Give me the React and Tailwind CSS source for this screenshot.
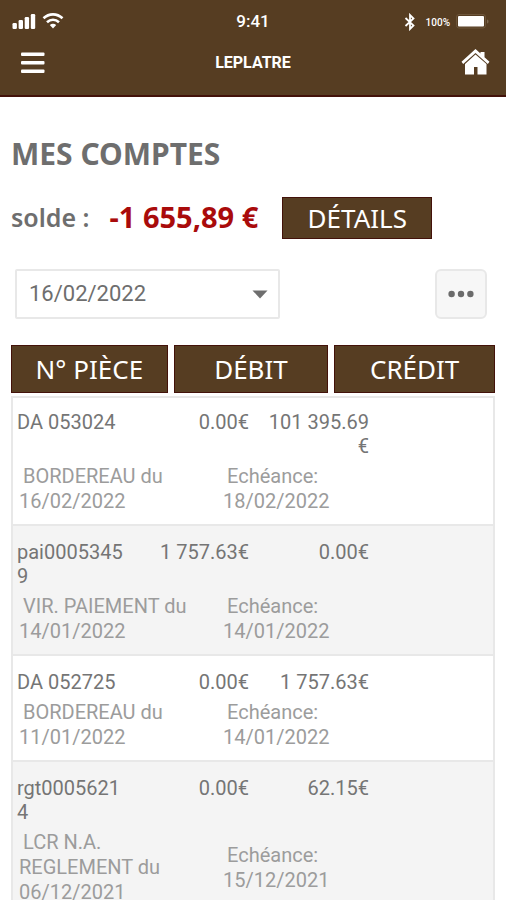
import { useState } from "react";

const BARS = [6, 9, 12, 15];

const ENTRIES = [
  { id: "DA 053024", debit: "0.00€", credit: "101 395.69€", label: "BORDEREAU du 16/02/2022", due: "18/02/2022" },
  { id: "pai00053459", debit: "1 757.63€", credit: "0.00€", label: "VIR. PAIEMENT du 14/01/2022", due: "14/01/2022" },
  { id: "DA 052725", debit: "0.00€", credit: "1 757.63€", label: "BORDEREAU du 11/01/2022", due: "14/01/2022" },
  { id: "rgt00056214", debit: "0.00€", credit: "62.15€", label: "LCR N.A. REGLEMENT du 06/12/2021", due: "15/12/2021" },
];

/* amounts and ids only break mid-string, never at their spaces */
const nbsp = (s) => s.replace(/ /g, "\u00a0");

function StatusBar() {
  return (
    <div className="grid grid-cols-3 items-center px-3 h-11">
      <div className="flex items-center gap-1.5">
        <svg width="24" height="18" viewBox="0 0 24 18" fill="#fff" aria-hidden="true">
          {BARS.map((h, i) => (
            <rect key={h} x={0.5 + i * 6.1} y={16 - h} width="4.4" height={h} rx="1.2" />
          ))}
        </svg>
        <svg width="22" height="18" viewBox="0 0 22 18" fill="none" stroke="#fff" strokeWidth="2.6" aria-hidden="true">
          <path d="M1.5 5.300C7 0 15 0 20.5 5.300" />
          <path d="M5 9.200c3.500-3.300 8.500-3.300 12 0" />
          <path d="M7.800 12c2-1.800 4.400-1.800 6.400 0L11 15.500z" fill="#fff" stroke="none" />
        </svg>
      </div>
      <div className="text-center text-[17px] font-medium">9:41</div>
      <div className="flex items-center justify-end gap-1 pr-1">
        <svg className="mr-1.5" width="12" height="18" viewBox="0 0 12 18" fill="none" stroke="#fff" strokeWidth="1.8" aria-hidden="true">
          <path d="M1.500 5l8 7.500L6 16V2l3.500 3.500-8 7.500" />
        </svg>
        <span className="text-[10px] font-medium">100%</span>
        <svg className="ml-0.5" width="34" height="16" viewBox="0 0 34 16" aria-hidden="true">
          <rect x="0.500" y="0.500" width="29" height="13.500" rx="2.500" fill="none" stroke="#6d563b" />
          <rect x="2" y="2" width="26" height="10.500" rx="1" fill="#fff" />
          <path d="M31 5.500v4c2-.5 2-3.500 0-4z" fill="#7d6850" />
        </svg>
      </div>
    </div>
  );
}

function TopBar() {
  return (
    <header className="bg-[#563d22] text-white border-b-2 border-[#43120a]">
      <StatusBar />
      <div className="grid grid-cols-3 items-center px-4 h-[38px] mb-[13px]">
        <button type="button" aria-label="Menu" className="justify-self-start p-1">
          <svg width="25" height="22" viewBox="0 0 25 22" fill="#fff" aria-hidden="true">
            <rect x="1" y="0.500" width="23.500" height="3.600" rx="1" />
            <rect x="1" y="9" width="23.500" height="3.600" rx="1" />
            <rect x="1" y="17.400" width="23.500" height="3.600" rx="1" />
          </svg>
        </button>
        <h1 className="text-center text-base font-bold">LEPLATRE</h1>
        <a href="#accueil" aria-label="Accueil" className="justify-self-end">
          <svg width="29" height="28" viewBox="0 0 29 28" fill="#fff" aria-hidden="true">
            <path d="M14.500 0L19.500 4.500V3h4v5.200l5 4.600-1.700 2.200L14.500 4 2.200 15l-1.700-2.200z" />
            <path d="M14.500 5.500L4 15V25.500h9v-7.500h3.500v7.500H25.500v-10.500z" />
          </svg>
        </a>
      </div>
    </header>
  );
}

function Entry({ e }) {
  return (
    <tbody className="block pt-3.5 pb-2.5 border-2 border-b-0 border-[#e8e8e8] first-of-type:pt-3 odd:bg-[#f4f4f4] even:bg-white">
      <tr className="grid grid-cols-4 leading-6 text-[#757575]">
        <td className="px-1 wrap-anywhere">{nbsp(e.id)}</td>
        <td className="pl-2 pr-1 text-right wrap-anywhere">{nbsp(e.debit)}</td>
        <td className="pl-2 pr-1 text-right wrap-anywhere">{nbsp(e.credit)}</td>
      </tr>
      <tr className="grid grid-cols-12 items-center mt-1.5 leading-[25px] text-[#9c9c9c] indent-1">
        <td className="col-span-5 pl-1.5">{e.label}</td>
        <td className="col-span-7 pl-2.5">Echéance:<br />{e.due}</td>
      </tr>
    </tbody>
  );
}

export default function App() {
  const [date, setDate] = useState("16/02/2022");
  return (
    <div className="min-h-screen bg-white font-['Roboto',sans-serif]">
      <TopBar />
      <main className="px-[11px] pt-[35px]">
        <h2 className="font-['Noto_Sans',sans-serif] text-[30px] leading-[44px] font-bold text-[#6e6e6e]">MES COMPTES</h2>

        <div className="flex items-center mt-[21px] font-['Noto_Sans',sans-serif] whitespace-nowrap">
          <span className="text-[25px] leading-10 pb-0.5 font-semibold text-[#6e6e6e]">solde :</span>
          <span className="ml-5 text-[29px] leading-10 pb-0.5 font-bold text-[#a90b0b]">-1 655,89 €</span>
          <button type="button" className="ml-6 w-[150px] h-[42px] bg-[#563d22] border border-[#43120a] text-[26px] leading-10 text-white">DÉTAILS</button>
        </div>

        <div className="flex items-center justify-between mt-[30px] pl-1 pr-2">
          <div className="relative w-[265px]">
            <select
              aria-label="Date"
              value={date}
              onChange={(ev) => setDate(ev.target.value)}
              className="appearance-none w-full h-[50px] pl-3 pb-0.5 rounded-xs border-2 border-[#e8e8e8] bg-white text-[22px] text-[#6e6e6e]"
            >
              <option>16/02/2022</option>
              <option>14/01/2022</option>
            </select>
            <svg className="absolute right-3 top-[21px] pointer-events-none" width="16" height="9" viewBox="0 0 16 9" fill="#6e6e6e" aria-hidden="true">
              <path d="M0.500 0.500h15L8 8.500z" />
            </svg>
          </div>
          <button type="button" aria-label="Plus d'options" className="flex items-center justify-center w-[52px] h-[50px] rounded-md border-2 border-[#e8e8e8] bg-[#f7f7f7]">
            <svg width="26" height="8" viewBox="0 0 26 8" fill="#6b6b6b" aria-hidden="true">
              <circle cx="3.600" cy="4" r="3.200" />
              <circle cx="13" cy="4" r="3.200" />
              <circle cx="22.400" cy="4" r="3.200" />
            </svg>
          </button>
        </div>

        <table className="block mt-[26px] text-xl">
          <thead className="block mb-[3px] font-['Noto_Sans',sans-serif] text-[26px] leading-[46px] text-white">
            <tr className="grid grid-cols-[157fr_155fr_161fr] gap-[6px]">
              <th className="bg-[#563d22] border border-[#43120a] font-normal">N° PIÈCE</th>
              <th className="bg-[#563d22] border border-[#43120a] font-normal">DÉBIT</th>
              <th className="bg-[#563d22] border border-[#43120a] font-normal">CRÉDIT</th>
            </tr>
          </thead>
          {ENTRIES.map((e) => <Entry key={e.id} e={e} />)}
        </table>
      </main>
    </div>
  );
}
